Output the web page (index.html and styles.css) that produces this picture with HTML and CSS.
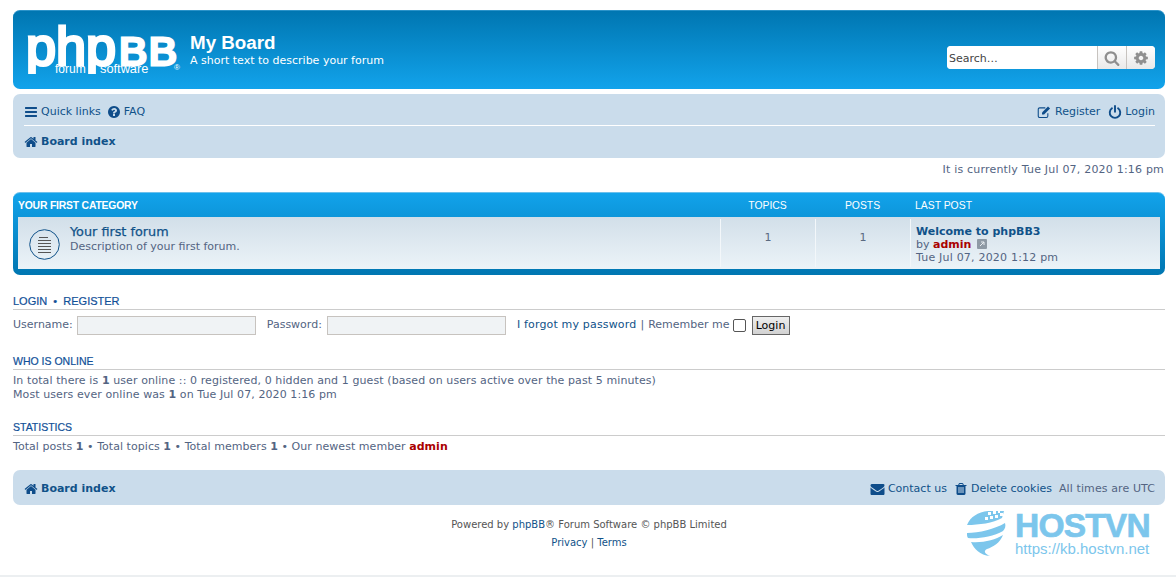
FILE: index.html
```html
<!DOCTYPE html>
<html lang="en">
<head>
<meta charset="utf-8">
<title>My Board</title>
<link rel="stylesheet" href="styles.css">
</head>
<body>
<div class="wrap">
  <header class="headerbar">
    <div class="logo">
      <span class="logo-main">php<span class="logo-bb">BB</span></span>
      <span class="logo-forum">forum</span>
      <span class="logo-software">software</span>
      <span class="logo-reg">®</span>
    </div>
    <div class="site-desc">
      <h1>My Board</h1>
      <p>A short text to describe your forum</p>
    </div>
    <div class="search">
      <span class="search-input">Search…</span>
      <span class="search-btn"><svg class="ic-search" viewBox="0 0 1792 1792"><path d="M1216 832q0-185-131.500-316.500T768 384 451.500 515.500 320 832t131.500 316.500T768 1280t316.500-131.500T1216 832zm512 832q0 52-38 90t-90 38q-54 0-90-38l-343-342q-179 124-399 124-143 0-273.500-55.500t-225-150-150-225T64 832t55.500-273.500 150-225 225-150T768 128t273.500 55.500 225 150 150 225T1472 832q0 220-124 399l343 343q37 37 37 90z"/></svg></span>
      <span class="search-btn"><svg class="ic-search" viewBox="0 0 1792 1792"><path d="M1152 896q0-106-75-181t-181-75-181 75-75 181 75 181 181 75 181-75 75-181zm512-109v222q0 12-8 23t-20 13l-185 28q-19 54-39 91 35 50 107 138 10 12 10 25t-9 23q-27 37-99 108t-94 71q-12 0-26-9l-138-108q-44 23-91 38-16 136-29 186-7 28-36 28H785q-14 0-24.500-8.500T749 1634l-28-184q-49-16-90-37l-141 107q-10 9-25 9-14 0-25-11-126-114-165-168-7-10-7-23 0-12 8-23 15-21 51-66.500t54-70.500q-27-50-41-99l-183-27q-13-2-21-12.500T128 1005V783q0-12 8-23t19-13l186-28q14-46 39-92-40-57-107-138-10-12-10-24 0-10 9-23 26-36 98.500-107.500T465 263q13 0 26 10l138 107q44-23 91-38 16-136 29-186 7-28 36-28h222q14 0 24.500 8.500T1043 158l28 184q49 16 90 37l142-107q9-9 24-9 13 0 25 10 129 119 165 170 7 8 7 22 0 12-8 23-15 21-51 66.500t-54 70.500q26 50 41 98l183 28q13 2 21 12.500t8 23.500z"/></svg></span>
    </div>
  </header>

  <nav class="navbar">
    <div class="nav-row nav-top">
      <div class="nav-group nav-left">
        <a class="nav-link"><svg class="ic" viewBox="0 0 1792 1792"><path d="M1664 1344v128q0 26-19 45t-45 19H192q-26 0-45-19t-19-45v-128q0-26 19-45t45-19h1408q26 0 45 19t19 45zm0-512v128q0 26-19 45t-45 19H192q-26 0-45-19t-19-45V832q0-26 19-45t45-19h1408q26 0 45 19t19 45zm0-512v128q0 26-19 45t-45 19H192q-26 0-45-19t-19-45V320q0-26 19-45t45-19h1408q26 0 45 19t19 45z"/></svg>Quick links</a>
        <a class="nav-link"><svg class="ic" viewBox="0 0 1792 1792"><path d="M1024 1376v-192q0-14-9-23t-23-9H800q-14 0-23 9t-9 23v192q0 14 9 23t23 9h192q14 0 23-9t9-23zm256-672q0-88-55.500-163T1086 425t-170-41q-243 0-371 213-15 24 8 42l132 100q7 6 19 6 16 0 25-12 53-68 86-92 34-24 86-24 48 0 85.500 26t37.500 59q0 38-20 61t-68 45q-63 28-115.500 86.500T768 1020v36q0 14 9 23t23 9h192q14 0 23-9t9-23q0-19 21.500-49.500T1100 957q32-18 49-28.500t46-35 44.500-48 28-60.500 12.500-81zm384 192q0 209-103 385.500T1281.500 1561 896 1664t-385.500-103T231 1281.500 128 896t103-385.500T510.500 231 896 128t385.500 103T1561 510.500 1664 896z"/></svg>FAQ</a>
      </div>
      <div class="nav-group nav-right">
        <a class="nav-link"><svg class="ic ic-wide" viewBox="0 0 18 16"><path class="line" d="M13 9.500v3.300a1.700 1.700 0 0 1-1.700 1.700H3.200a1.700 1.700 0 0 1-1.700-1.700V4.700A1.700 1.700 0 0 1 3.200 3H10"/><path d="M6 8.500 13.200 1.300l2.500 2.500L8.500 11H6z"/></svg>Register</a>
        <a class="nav-link"><svg class="ic" viewBox="0 0 16 16"><path class="line thick" d="M4.500 3.800a6 6 0 1 0 7 0M8 1.200v6.600"/></svg>Login</a>
      </div>
    </div>
    <div class="nav-row">
      <a class="nav-link crumb"><svg class="ic" viewBox="0 0 1792 1792"><path d="M1472 992v480q0 26-19 45t-45 19h-384v-384H768v384H384q-26 0-45-19t-19-45V992q0-1 .5-3t.5-3l575-474 575 474q1 2 1 6zm223-69l-62 74q-8 9-21 11h-3q-13 0-21-7L896 424l-692 577q-12 8-24 7-13-2-21-11l-62-74q-8-10-7-23.500t11-21.500l719-599q32-26 76-26t76 26l244 204V288q0-14 9-23t23-9h192q14 0 23 9t9 23v408l219 182q10 8 11 21.500t-7 23.500z"/></svg>Board index</a>
    </div>
  </nav>

  <p class="time date">It is currently Tue Jul 07, 2020 1:16 pm</p>

  <section class="forabg">
    <div class="cols cols-head">
      <div class="col-main">Your first category</div>
      <div class="col-num">Topics</div>
      <div class="col-num">Posts</div>
      <div class="col-last">Last post</div>
    </div>
    <div class="cols forum-row">
      <div class="col-main forum-info">
        <svg class="forum-icon" viewBox="0 0 31 31"><circle cx="15.500" cy="15.500" r="14.800"/><path d="M10 8.500h9M9 11.500h13M9 14.500h13M9 17.500h13M9 20.500h13M9 23.500h13"/></svg>
        <div>
          <a class="forum-title">Your first forum</a>
          <div>Description of your first forum.</div>
        </div>
      </div>
      <div class="col-num cell">1</div>
      <div class="col-num cell">1</div>
      <div class="col-last cell last-cell">
        <a class="last-title">Welcome to phpBB3</a>
        <div>by <b class="user">admin</b> <svg class="ext" viewBox="0 0 10 10"><rect width="10" height="10" rx="1"/><path d="M3 7l4-4M4 3h3v3"/></svg></div>
        <div class="date">Tue Jul 07, 2020 1:12 pm</div>
      </div>
    </div>
  </section>

  <h3 class="sec first"><a>Login</a> &nbsp;•&nbsp; <a>Register</a></h3>
  <form class="login">
    <label>Username:</label><span class="field"></span>
    <label class="pw">Password:</label><span class="field"></span>
    <a class="forgot">I forgot my password</a><span class="pipe">|</span><label>Remember me</label><span class="check"></span><span class="btn">Login</span>
  </form>

  <h3 class="sec">Who is online</h3>
  <p class="info">In total there is <b>1</b> user online :: 0 registered, 0 hidden and 1 guest (based on users active over the past 5 minutes)<br>Most users ever online was <b>1</b> on Tue Jul 07, 2020 1:16 pm</p>

  <h3 class="sec">Statistics</h3>
  <p class="info info-stats">Total posts <b>1</b> • Total topics <b>1</b> • Total members <b>1</b> • Our newest member <b class="user">admin</b></p>

  <nav class="navbar nav-bottom">
    <a class="nav-link crumb"><svg class="ic" viewBox="0 0 1792 1792"><path d="M1472 992v480q0 26-19 45t-45 19h-384v-384H768v384H384q-26 0-45-19t-19-45V992q0-1 .5-3t.5-3l575-474 575 474q1 2 1 6zm223-69l-62 74q-8 9-21 11h-3q-13 0-21-7L896 424l-692 577q-12 8-24 7-13-2-21-11l-62-74q-8-10-7-23.500t11-21.500l719-599q32-26 76-26t76 26l244 204V288q0-14 9-23t23-9h192q14 0 23 9t9 23v408l219 182q10 8 11 21.500t-7 23.500z"/></svg>Board index</a>
    <div class="nav-group">
      <a class="nav-link"><svg class="ic ic-wide" viewBox="0 0 1792 1792"><path d="M1792 710v794q0 66-47 113t-113 47H160q-66 0-113-47T0 1504V710q44 49 101 87 362 246 497 345 57 42 92.500 65.500t94.500 48 110 24.500h2q51 0 110-24.500t94.500-48 92.500-65.500q170-123 498-345 57-39 100-87zm0-294q0 79-49 151t-122 123q-376 261-468 325-10 7-42.500 30.500t-54 38-52 32.500-57.500 27-50 9h-2q-23 0-50-9t-57.500-27-52-32.500-54-38T639 1015q-91-64-262-182.500T172 690q-62-42-117-115.500T0 438q0-78 41.500-130T160 256h1472q65 0 112.500 47t47.500 113z"/></svg>Contact us</a>
      <a class="nav-link"><svg class="ic" viewBox="0 0 1792 1792"><path d="M704 1376V672q0-14-9-23t-23-9h-64q-14 0-23 9t-9 23v704q0 14 9 23t23 9h64q14 0 23-9t9-23zm256 0V672q0-14-9-23t-23-9h-64q-14 0-23 9t-9 23v704q0 14 9 23t23 9h64q14 0 23-9t9-23zm256 0V672q0-14-9-23t-23-9h-64q-14 0-23 9t-9 23v704q0 14 9 23t23 9h64q14 0 23-9t9-23zM672 384h448l-48-117q-7-9-17-11H738q-10 2-17 11zm928 32v64q0 14-9 23t-23 9h-96v948q0 83-47 143.500t-113 60.500H480q-66 0-113-58.500T320 1464V512h-96q-14 0-23-9t-9-23v-64q0-14 9-23t23-9h309l70-167q15-37 54-63t79-26h320q40 0 79 26t54 63l70 167h309q14 0 23 9t9 23z"/></svg>Delete cookies</a>
      <span class="tz">All times are UTC</span>
    </div>
  </nav>

  <footer class="copyright">
    <p>Powered by <a>phpBB</a>® Forum Software © phpBB Limited</p>
    <p class="policy"><a>Privacy</a> | <a>Terms</a></p>
    <div class="watermark">
      <svg class="wm-globe" viewBox="0 0 44 46"><path d="M2 14C5 6 13 1 23 0L39 0 37 7C28 12 14 14 2 14z"/><path d="M2 22C14 22 30 18 40 12 41 15 40 18 38 20 28 26 12 28 3 27 2 26 2 24 2 22z"/><path d="M6 31C18 32 30 29 38 24 35 32 28 36 22 38 18 40 20 43 25 45 15 44 9 38 6 31z"/><path class="wm-dots" d="M20 6h3v3h-3zM25 5h3v3h-3zM30 4h3v3h-3zM35 2h3v3h-3zM23 1h3v3h-3zM28 0h3v3h-3zM33 0h2v2h-2z"/></svg>
      <div>
        <div class="wm-name">HOSTVN</div>
        <div class="wm-url">https://kb.hostvn.net</div>
      </div>
    </div>
  </footer>
</div>
</body>
</html>
```
FILE: styles.css
```css
* { box-sizing: border-box; }
html, body { margin: 0; padding: 0; }
body {
  background: #fff;
  color: #536482;
  font: 11px/14px "DejaVu Sans", Verdana, sans-serif;
  height: 577px;
  overflow: hidden;
}
a { color: #105289; }
p { margin: 0; }
svg { fill: currentColor; }
.date { letter-spacing: .2px; }

.wrap {
  height: 577px;
  padding: 10px 11px 0 13px;
  border-bottom: 2px solid #eceff1;
}

/* header */
.headerbar {
  position: relative;
  display: flex;
  height: 79px;
  border-radius: 7px;
  border-top: 1px solid #2b93c9;
  background: linear-gradient(#0076b1, #12a3eb);
  color: #fff;
  padding: 0 10px 0 15px;
}
.logo { position: relative; width: 162px; flex: none; }
.logo-main {
  position: absolute;
  left: -2px;
  top: 3px;
  height: 60px;
  clip-path: inset(0 -10px 0 -10px);
  font: 54px/64px "Liberation Sans", sans-serif;
  -webkit-text-stroke: 3px #fff;
  white-space: nowrap;
}
.logo-bb {
  display: inline-block;
  font-size: 38px;
  letter-spacing: 1.500px;
  margin-left: 3px;
  transform: scaleX(1.11);
  transform-origin: left bottom;
}
.logo-forum, .logo-software {
  position: absolute;
  top: 51px;
  font: 12px/14px "Liberation Sans", sans-serif;
}
.logo-forum { left: 27px; }
.logo-software { left: 72px; font-size: 12.800px; }
.logo-reg { position: absolute; left: 146px; top: 52px; font: 8px/10px "Liberation Sans", sans-serif; }
.site-desc { padding-top: 20px; }
.site-desc h1 {
  margin: 0;
  font: bold 18.800px/23px "Liberation Sans", sans-serif;
}
.site-desc p { font-size: 11px; line-height: 13px; }
.search {
  display: flex;
  align-self: flex-start;
  margin: 35px 0 0 auto;
  height: 23px;
  border-radius: 4px;
  overflow: hidden;
  background: #f2f2f2;
}
.search-input {
  width: 150px;
  padding: 0 2px;
  background: #fff;
  color: #444;
  line-height: 25px;
}
.search-btn {
  width: 29px;
  display: flex;
  align-items: center;
  justify-content: center;
  border-left: 1px solid #c7c3bf;
  background: linear-gradient(#fff, #e9e9e9);
  color: #8f8f8f;
}
.ic-search { width: 16px; height: 16px; }

/* nav */
.navbar {
  background: #cadceb;
  border-radius: 7px;
  padding: 0 10px 0 11px;
  margin-top: 5px;
}
.nav-row { display: flex; justify-content: space-between; align-items: center; height: 32px; }
.nav-top { border-bottom: 1px solid #fff; padding-top: 5px; }
.nav-group { display: flex; align-items: center; gap: 7px; }
.nav-left { gap: 6px; }
.nav-right { gap: 8px; }
.nav-link { display: inline-flex; align-items: center; }
.ic { width: 14px; height: 14px; margin-right: 3px; color: #0f4d8a; flex: none; }
.ic-wide { width: 15px; }
.line { fill: none; stroke: currentColor; stroke-width: 1.300; }
.thick { stroke-width: 2.200; stroke-linecap: round; }
.crumb { font-weight: bold; }
.nav-bottom {
  display: flex;
  justify-content: space-between;
  align-items: center;
  height: 35px;
  margin-top: 16px;
  padding-top: 2px;
}
.tz { letter-spacing: .1px; }

.time { text-align: right; margin-top: 5px; padding-right: 1px; }

/* forum list */
.forabg {
  margin-top: 15px;
  padding: 0 5px 6px;
  border-radius: 7px;
  background: linear-gradient(#12a3eb, #0076b1);
  border-top: 1px solid #6cc0ec;
}
.cols { display: flex; }
.cols-head {
  height: 24px;
  padding-top: 2px;
  align-items: center;
  color: #fff;
  font: 10.400px/14px "Liberation Sans", sans-serif;
  text-transform: uppercase;
}
.cols-head .col-main { font-weight: bold; letter-spacing: -.200px; }
.col-main { width: 702px; }
.col-num { width: 95px; text-align: center; }
.col-last { flex: 1; padding-left: 5px; }
.forum-row {
  height: 52px;
  background: linear-gradient(#d2dfe9, #ecf3f8);
  padding: 2px 0;
}
.forum-info { display: flex; align-items: flex-start; gap: 10px; padding: 5px 0 0 11px; line-height: 13px; }
.forum-icon { width: 31px; height: 31px; margin-top: 5px; fill: none; stroke: #105289; flex: none; }
.forum-icon path { stroke: #555; }
.forum-title { font-size: 12.800px; line-height: 16px; display: block; -webkit-text-stroke: .25px #105289; }
.cell { border-left: 1px solid #f3f7fa; }
.col-num.cell { padding-top: 12px; color: #5a6a80; }
.last-cell { line-height: 13px; padding-top: 6px; }
.last-title { font-weight: bold; }
.user { color: #a00; }
.ext { width: 10px; height: 10px; margin-left: 2px; vertical-align: -1px; fill: #8e9aa5; }
.ext path { fill: none; stroke: #e8edf1; stroke-width: 1; }

/* sections */
.sec {
  margin: 16px 0 0;
  height: 17px;
  padding-top: 1px;
  border-bottom: 1px solid #ccc;
  font: 10.500px/14px "Liberation Sans", sans-serif;
  text-transform: uppercase;
  color: #115098;
  -webkit-text-stroke: .2px #115098;
}
.sec a { color: #115098; }
.sec.first { margin-top: 18px; font-size: 11px; }
.info { margin-top: 4px; letter-spacing: .09px; }
.info-stats { letter-spacing: .05px; }
.info + .sec { margin-top: 17px; }

.login { display: flex; align-items: center; margin-top: 5px; height: 20px; margin-bottom: 18px; }
.field {
  width: 179px;
  height: 19px;
  margin-left: 4px;
  border: 1px solid #c7c3bf;
  background: #f0f3f5;
}
.pw { margin-left: 11px; }
.pw + .field { margin-left: 5px; }
.forgot { margin-left: 11px; letter-spacing: .17px; }
.pipe { margin: 0 4px; }
.check {
  width: 13px;
  height: 13px;
  margin: 1px 6px 0 3px;
  border: 1px solid #555;
  border-radius: 2px;
  background: #fff;
}
.btn {
  width: 38px;
  height: 19px;
  border: 1px solid #666;
  background: linear-gradient(#efefef, #d2d2d2);
  color: #000;
  text-align: center;
  line-height: 18px;
}

/* footer */
.copyright {
  position: relative;
  text-align: center;
  font-size: 10px;
  line-height: 13px;
  margin-top: 13px;
  color: #555;
}
.policy { margin-top: 5px; }
.watermark {
  position: absolute;
  left: 952px;
  top: -7px;
  display: flex;
  gap: 6px;
  color: #7cc6ec;
  text-align: left;
}
.wm-globe { width: 44px; height: 46px; fill: #7cc6ec; }
.wm-dots { fill: #fff; }
.wm-name {
  font: bold 33.500px/30px "Liberation Sans", sans-serif;
  letter-spacing: -.800px;
  -webkit-text-stroke: .7px #7cc6ec;
}
.wm-url { font: 15px/15px "Liberation Sans", sans-serif; }
```
